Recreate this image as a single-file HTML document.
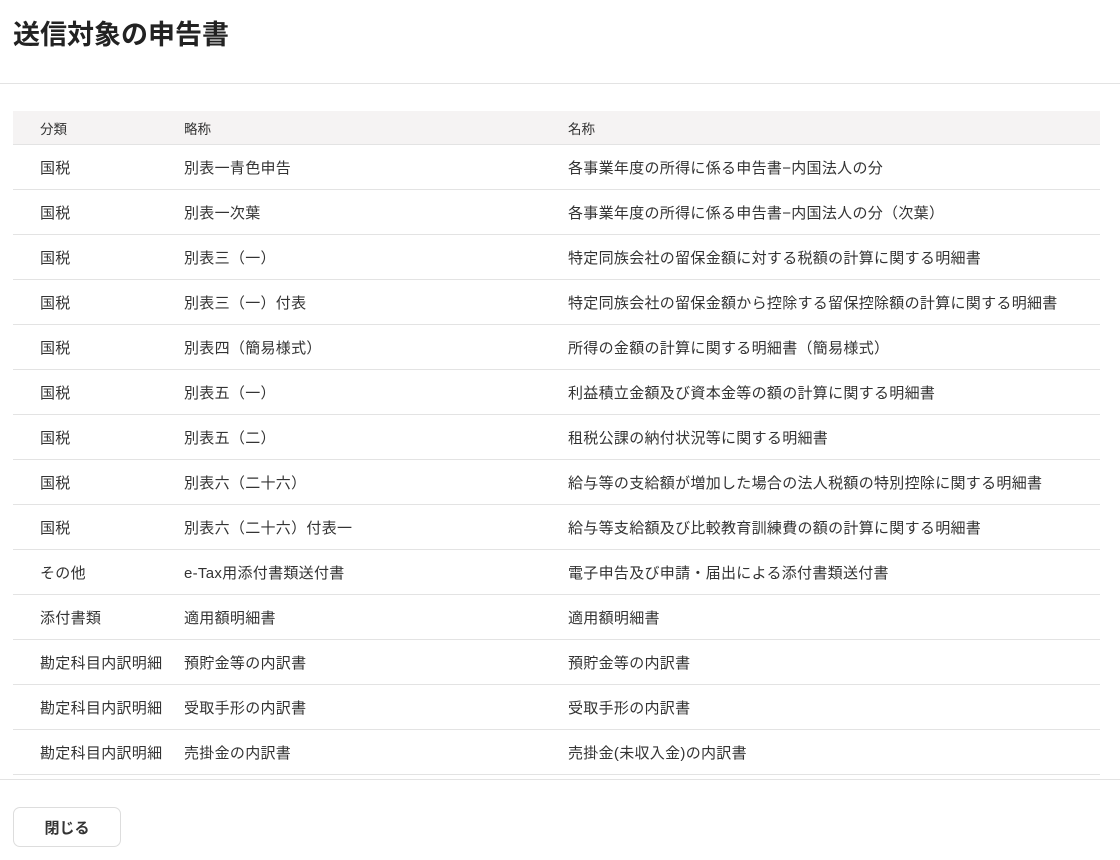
<!DOCTYPE html>
<html><head><meta charset="utf-8"><style>
body{margin:0;width:1120px;height:860px;background:#fff;font-family:"Liberation Sans","Noto Sans CJK JP",sans-serif;color:#333;overflow:hidden;position:relative}
h1{position:absolute;left:13px;top:16px;margin:0;font-size:27px;font-weight:bold;color:#222;line-height:38px}
.d1{position:absolute;left:0;right:0;top:83px;border-top:1px solid #e3e3e3}
table{position:absolute;left:13px;top:111px;width:1087px;border-collapse:collapse}
th{height:33px;background:#f5f3f3;font-weight:normal;font-size:13.5px;text-align:left;padding:0;border-bottom:1px solid #e3e3e3;color:#333}
td{height:44px;font-size:15px;letter-spacing:0.3px;padding:0;border-bottom:1px solid #e3e3e3}
.c1{padding-left:27px;width:144px}.c2{width:384px}
.d2{position:absolute;left:0;right:0;top:779px;border-top:1px solid #e3e3e3}
.btn{position:absolute;left:13px;top:807px;width:106px;height:38px;border:1px solid #ddd;border-radius:7px;font-size:15px;font-weight:bold;display:flex;align-items:center;justify-content:center;color:#333}
</style></head><body>
<h1>送信対象の申告書</h1>
<div class="d1"></div>
<table>
<tr><th class="c1">分類</th><th class="c2">略称</th><th>名称</th></tr>
<tr><td class="c1">国税</td><td>別表一青色申告</td><td>各事業年度の所得に係る申告書−内国法人の分</td></tr>
<tr><td class="c1">国税</td><td>別表一次葉</td><td>各事業年度の所得に係る申告書−内国法人の分（次葉）</td></tr>
<tr><td class="c1">国税</td><td>別表三（一）</td><td>特定同族会社の留保金額に対する税額の計算に関する明細書</td></tr>
<tr><td class="c1">国税</td><td>別表三（一）付表</td><td>特定同族会社の留保金額から控除する留保控除額の計算に関する明細書</td></tr>
<tr><td class="c1">国税</td><td>別表四（簡易様式）</td><td>所得の金額の計算に関する明細書（簡易様式）</td></tr>
<tr><td class="c1">国税</td><td>別表五（一）</td><td>利益積立金額及び資本金等の額の計算に関する明細書</td></tr>
<tr><td class="c1">国税</td><td>別表五（二）</td><td>租税公課の納付状況等に関する明細書</td></tr>
<tr><td class="c1">国税</td><td>別表六（二十六）</td><td>給与等の支給額が増加した場合の法人税額の特別控除に関する明細書</td></tr>
<tr><td class="c1">国税</td><td>別表六（二十六）付表一</td><td>給与等支給額及び比較教育訓練費の額の計算に関する明細書</td></tr>
<tr><td class="c1">その他</td><td>e-Tax用添付書類送付書</td><td>電子申告及び申請・届出による添付書類送付書</td></tr>
<tr><td class="c1">添付書類</td><td>適用額明細書</td><td>適用額明細書</td></tr>
<tr><td class="c1">勘定科目内訳明細</td><td>預貯金等の内訳書</td><td>預貯金等の内訳書</td></tr>
<tr><td class="c1">勘定科目内訳明細</td><td>受取手形の内訳書</td><td>受取手形の内訳書</td></tr>
<tr><td class="c1">勘定科目内訳明細</td><td>売掛金の内訳書</td><td>売掛金(未収入金)の内訳書</td></tr>
</table>
<div class="d2"></div>
<div class="btn">閉じる</div>
</body></html>
